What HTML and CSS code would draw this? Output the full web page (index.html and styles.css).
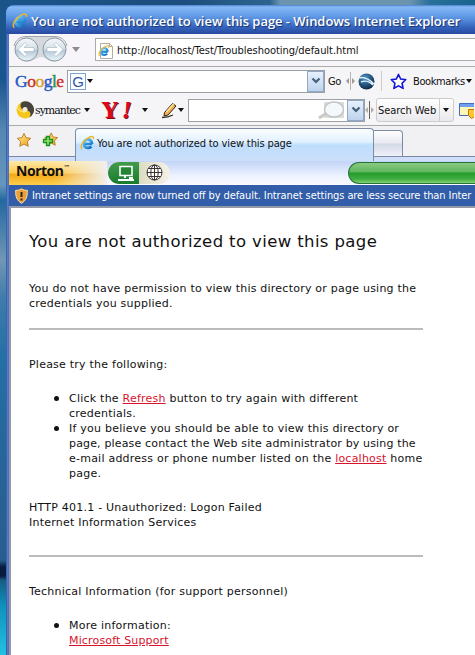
FILE: index.html
```html
<!DOCTYPE html>
<html lang="en">
<head>
<meta charset="utf-8">
<title>You are not authorized to view this page</title>
<link rel="stylesheet" href="styles.css">
</head>
<body>
<svg class="defs" width="0" height="0" aria-hidden="true">
  <defs>
    <linearGradient id="orb" x1="0" y1="0" x2="0" y2="1"><stop offset="0" stop-color="#f4f7fa"/><stop offset=".45" stop-color="#d8e2e9"/><stop offset=".55" stop-color="#b4c8d6"/><stop offset="1" stop-color="#edf7fb"/></linearGradient>
    <linearGradient id="ie" x1="0" y1="0" x2="1" y2="1"><stop offset="0" stop-color="#74d4fa"/><stop offset="1" stop-color="#0868bd"/></linearGradient>
    <linearGradient id="gold" x1="0" y1="0" x2="1" y2="1"><stop offset="0" stop-color="#fff4a0"/><stop offset="1" stop-color="#ee9a13"/></linearGradient>
    <radialGradient id="earth" cx=".4" cy=".3" r=".7"><stop offset="0" stop-color="#4f94c6"/><stop offset="1" stop-color="#0c2a4b"/></radialGradient>
    <symbol id="e" viewBox="0 0 16 16"><path d="M12.900 8.900H4.800M12.900 9A4.500 4.500 0 1 0 12 11.500" fill="none" stroke="url(#ie)" stroke-width="3"/><path d="M4.800 8.400h8.200v1.500H4.800z" fill="#1c86d4"/><path d="M2.200 14.600C-.5 12 3.500 5 9.200 2.200c3.400-1.800 6.100-1.500 4.900 1.600" fill="none" stroke="#e9b62b" stroke-width="1.500"/></symbol>
    <symbol id="star" viewBox="0 0 16 16"><path d="M8 1l2.200 4.600 5 .6-3.600 3.500.9 5L8 12.300l-4.500 2.400.9-5L.8 6.200l5-.6z"/></symbol>
    <symbol id="chev" viewBox="0 0 10 8"><path d="M1.500 1.500L5 5l3.500-3.500" fill="none" stroke="#455f7c" stroke-width="2.200"/></symbol>
  </defs>
</svg>
<div class="window">
  <header class="titlebar">
    <svg class="title-icon" width="16" height="16"><use href="#e"/></svg>
    <span class="title">You are not authorized to view this page - Windows Internet Explorer</span>
  </header>
  <div class="chrome">
    <div class="row nav">
      <svg class="orbs" width="56" height="29" viewBox="0 0 56 29">
        <path d="M13 1.500h29a13 13 0 0 1 0 25.500c-6 0-10-5-14-5s-8 5-15 5a13 13 0 0 1 0-25.500z" fill="#d5d8dc"/><path d="M1 11C3 4 8 1.500 13 1.500h29c5 0 10 2.500 12 9.500" fill="none" stroke="#a2a6aa"/>
        <circle cx="13.500" cy="14.500" r="11.500" fill="url(#orb)" stroke="#8999a6"/><circle cx="41.500" cy="14.500" r="11.500" fill="url(#orb)" stroke="#8999a6"/>
        <path d="M5 14.500l7-7 2 2-3 3h10v4H11l3 3-2 2z" fill="#fff" stroke="#a7bbc9" stroke-width=".7"/><path d="M50 14.500l-7-7-2 2 3 3H34v4h10l-3 3 2 2z" fill="#fff" stroke="#a7bbc9" stroke-width=".7"/>
      </svg>
      <i class="caret grey"></i>
      <div class="address">
        <svg width="17" height="18" viewBox="0 0 17 18"><path d="M2.500 1.500h9l3 3v12h-12z" fill="#fff" stroke="#b3aba0"/><path d="M11.500 1.500v3h3" fill="none" stroke="#b3aba0"/><use href="#e" x="0" y="3" width="12" height="12"/></svg>
        <span>http://localhost/Test/Troubleshooting/default.html</span>
      </div>
    </div>
    <div class="row google">
      <span class="glogo"><b class="b">G</b><b class="r">o</b><b class="y">o</b><b class="b">g</b><b class="g">l</b><b class="r">e</b></span>
      <div class="field gfield"><span class="gbadge">G</span><i class="caret"></i><span class="drop"><svg width="10" height="8"><use href="#chev"/></svg></span></div>
      <span class="go">Go</span>
      <svg class="grip" width="9" height="18" viewBox="0 0 9 18"><path d="M4.500 0v18" stroke="#b9b2ad"/><path d="M3 6v6L0 9zM6 6v6l3-3z" fill="#a09892"/></svg>
      <svg class="earth" width="17" height="17" viewBox="0 0 17 17"><circle cx="8.500" cy="8.500" r="8" fill="url(#earth)"/><path d="M1 5c5-2 10 1 15 6M3 9c5-2 8-1 12 3" fill="none" stroke="#d6edfa" stroke-width="1.500"/></svg>
      <i class="sep"></i>
      <svg class="bstar" width="17" height="17" viewBox="-.5 -.5 17 17"><use href="#star" width="16" height="16" fill="#fff" stroke="#1414d8" stroke-width="1.600"/></svg>
      <span class="bookmarks">Bookmarks</span><i class="caret bcaret"></i>
    </div>
    <div class="row yahoo">
      <svg class="sym" width="18" height="18" viewBox="0 0 18 18"><circle cx="9" cy="9" r="8.500" fill="#f5c71d"/><path d="M6 1a8.500 8.500 0 1 1 7 15.600C17 12 12 8.500 9 9 5 9 3 4 6 1z" fill="#46443f"/><circle cx="9" cy="8.500" r="2.500" fill="#f2ead0"/><path d="M1 5c1 5 5 6 8 6" fill="none" stroke="#fff1a2"/></svg>
      <span class="symtext">symantec</span><i class="caret c1"></i>
      <span class="ylogo"><span class="yy">Y</span><span class="bang">!</span></span><i class="caret c2"></i>
      <svg class="pencil" width="16" height="17" viewBox="0 0 16 17"><path d="M2.500 10.500l8-9 3.500 2.500-8 9-4 1z" fill="#f4ae4d" stroke="#34240d"/><path d="M4.500 10l7-8" stroke="#ffe5a6" stroke-width="1.500"/><path d="M0 15.500c4 0 7-.5 11-2.500" fill="none" stroke="#3a3321" stroke-width="1.300"/></svg><i class="caret c3"></i>
      <div class="field yfield"><svg class="glass" width="28" height="19" viewBox="0 0 28 19"><path d="M6 1h20v16H6z" fill="#dcdcd8"/><path d="M1 17l8-5" stroke="#c8c8c4" stroke-width="3"/><ellipse cx="16" cy="8.500" rx="9.500" ry="7.500" fill="#f5f8fb" stroke="#c0c5ca" stroke-width="1.500"/></svg><span class="drop"><svg width="10" height="8"><use href="#chev"/></svg></span></div>
      <svg class="grip g2" width="9" height="18" viewBox="0 0 9 18"><path d="M4.500 0v18" stroke="#66615e"/><path d="M3 6v6L0 9zM6 6v6l3-3z" fill="#b3aeaa"/></svg>
      <div class="search"><span>Search Web</span><b><i class="caret"></i></b></div>
      <svg class="popup" width="15" height="17" viewBox="0 0 15 17"><path d="M.5 1.500h17v12H.5z" fill="#fff7b8" stroke="#446bc0"/><path d="M1 2h16v3H1z" fill="#6e9ff1"/><path d="M9.500 7.500h6v7l-3 2-3-3z" fill="#ffc72d" stroke="#b87809"/></svg>
    </div>
    <div class="row tabs">
      <svg class="fav" width="16" height="16" viewBox="-.5 -.5 17 17"><use href="#star" width="16" height="16" fill="url(#gold)" stroke="#b77b20"/></svg>
      <svg class="add" width="17" height="16" viewBox="0 0 17 16"><g transform="translate(2 0) scale(.9)"><use href="#star" width="16" height="16" fill="url(#gold)" stroke="#b77b20"/></g><path d="M4.500 4.500h3v3h3v3h-3v3h-3v-3h-3v-3h3z" fill="#8de06b" stroke="#19911c" stroke-width="1.300"/></svg>
      <div class="tab"><svg width="15" height="16"><use href="#e"/></svg><span>You are not authorized to view this page</span></div>
      <div class="newtab"></div>
    </div>
    <div class="row norton">
      <div class="nlogo"><span>Norton</span><sup>™</sup></div>
      <div class="npill">
        <div class="pc"><svg width="18" height="17" viewBox="0 0 18 17"><path d="M3 1.500h12v9H3z" fill="#268435" stroke="#fff" stroke-width="1.600"/><path d="M8 11v2M1 15h16M12 13h4" stroke="#fff" stroke-width="2"/></svg></div>
        <div class="net"><svg width="17" height="17" viewBox="0 0 17 17"><g fill="none" stroke="#38332d"><circle cx="8.500" cy="8.500" r="7.500" fill="#fff"/><ellipse cx="8.500" cy="8.500" rx="3.700" ry="7.500"/><path d="M8.500 1v15M1 8.500h15M2.500 4.500h12M2.500 12.500h12"/></g></svg></div>
      </div>
      <div class="green"></div>
    </div>
    <div class="row info">
      <svg width="13" height="16" viewBox="0 0 13 16"><path d="M6.500.7C8 2 10.500 2.500 12.300 2.300c.3 6-1 10-5.800 13-4.800-3-6.100-7-5.800-13C2.500 2.500 5 2 6.500.7z" fill="#eba03b" stroke="#ffe1a4"/><path d="M6.500 4v5M6.500 10.500v2" stroke="#302515" stroke-width="2"/></svg>
      <span>Intranet settings are now turned off by default. Intranet settings are less secure than Inter</span>
    </div>
  </div>
  <main class="page">
    <h1>You are not authorized to view this page</h1>
    <p class="lead">You do not have permission to view this directory or page using the<br>credentials you supplied.</p>
    <hr>
    <p class="try">Please try the following:</p>
    <ul>
      <li>Click the <a>Refresh</a> button to try again with different<br>credentials.</li>
      <li>If you believe you should be able to view this directory or<br><span class="tight">page, please contact the Web site administrator by using the</span><br>e-mail address or phone number listed on the <a>localhost</a> home<br>page.</li>
    </ul>
    <p class="status">HTTP 401.1 - Unauthorized: Logon Failed<br>Internet Information Services</p>
    <hr>
    <p class="tech">Technical Information (for support personnel)</p>
    <ul><li>More information:<br><a class="tight">Microsoft Support</a></li></ul>
  </main>
</div>
</body>
</html>
```
FILE: styles.css
```css
* { box-sizing: border-box; }
html, body { margin: 0; width: 475px; height: 655px; overflow: hidden; }
body {
  padding: 5px 0 0 6px;
  background:
    linear-gradient(90deg, #1b5488 0 38px, #1c4d7c 180px, #2d648f 270px, #6b93ae 280px 410px, #28709a 430px, #19648f) 0 0 / 475px 14px no-repeat,
    linear-gradient(#1b5488 0, #195690 80px, #5687b2 130px, #6696bd 185px, #2369a0 200px, #7296b5 260px, #3d7baa 300px, #246fa5 360px, #286294 500px, #295d8e 560px, #071b3e 567px 576px, #175b83 580px, #0f90ba 605px, #21c2e2 655px);
  font: 11px "DejaVu Sans Condensed", "DejaVu Sans", sans-serif;
  font-stretch: condensed;
  color: #111;
}
.defs { display: block; position: absolute; }
svg { flex: none; display: block; }
.window { width: 469px; height: 650px; border-radius: 8px 0 0 0; background: linear-gradient(90deg, #2c55a8, #6488cc 2px, #3560b0 3px); overflow: hidden; }
.titlebar { height: 29px; display: flex; align-items: center; padding: 2px 0 0 6px; background: linear-gradient(#4c82cf 0, #86b9f5 2px, #6da6ee 8px, #538adb 15px, #3665be 22px, #2949a0 29px); }
.title { margin-left: 3px; font: 600 13px "Open Sans", sans-serif; letter-spacing: -.04px; color: #fff; text-shadow: 1px 1px 1px #163170; white-space: nowrap; }
.chrome { margin-left: 3px; width: 466px; background: #f5f4f6; overflow: hidden; }
.row { display: flex; align-items: center; white-space: nowrap; overflow: hidden; }
.row > * { flex: none; }
.caret { display: block; width: 0; height: 0; border: solid transparent; border-width: 4px 3.500px 0; border-top-color: #111; flex: none; }
.grey { border-width: 5px 4px 0; border-top-color: #8b8b8b; margin-left: 3px; }

.nav { height: 33px; padding: 0 0 1px 4px; border-bottom: 1px solid #aaa; background: #f7f5f9; }
.address { margin-left: 15px; width: 380px; height: 23px; border: 1px solid #aaa; border-right: 0; background: #fff; display: flex; align-items: center; padding: 2px 0 0 2px; gap: 2px; letter-spacing: -.03px; }

.google { height: 28px; padding-left: 6px; }
.glogo { width: 49px; font: 17.500px "Liberation Serif", serif; letter-spacing: -.5px; }
.glogo b { font-weight: 400; -webkit-text-stroke: .4px; }
.glogo .b { color: #2857c5; } .glogo .r { color: #cf3029; } .glogo .y { color: #d7a31d; } .glogo .g { color: #269145; }
.field { height: 23px; border: 1px solid #9b9fa8; background: #fff; display: flex; align-items: center; }
.gfield { margin-left: 3px; width: 258px; padding-left: 2px; }
.gbadge { width: 16px; height: 17px; border: 1px solid #79a6d7; color: #2c56ab; font: 15px/15px "Liberation Sans", sans-serif; text-align: center; margin-right: 1px; }
.drop { margin-left: auto; width: 17px; height: 21px; border: 1px solid #91a9c4; background: linear-gradient(#e7f1fc, #bdd3ec); display: flex; align-items: center; justify-content: center; }
.go { margin-left: 3px; width: 14px; letter-spacing: -.3px; }
.grip { margin-left: 4px; }
.earth { margin-left: 3px; }
.sep { margin-left: 6px; width: 1px; height: 20px; background: #ccc; }
.bstar { margin-left: 8px; }
.bookmarks { margin-left: 6px; width: 52px; letter-spacing: -.4px; }
.bcaret { margin-left: 1px; }

.yahoo { height: 31px; padding-left: 7px; border-bottom: 1px solid #aaa; }
.symtext { margin-left: 1px; width: 45px; font: 11px "DejaVu Serif", serif; letter-spacing: -1px; }
.c1 { margin-left: 4px; }
.ylogo { margin-left: 10px; width: 34px; display: flex; font: 900 22px/24px "DejaVu Serif", serif; color: #dc0a18; text-shadow: 1px 1px 0 #77111a; }
.yy { width: 22px; padding-left: 2px; }
.bang { font-style: italic; }
.c2 { margin-left: 8px; }
.pencil { margin-left: 14px; }
.c3 { margin-left: 0; }
.yfield { margin-left: 4px; width: 177px; }
.glass { margin-left: auto; }
.yfield .drop { margin-left: 1px; }
.g2 { margin-left: 0; }
.search { margin-left: 2px; width: 78px; height: 24px; border: 1px solid #ccc; border-radius: 3px; background: linear-gradient(#fff, #e9e8ec); display: flex; align-items: center; padding-left: 1px; }
.search span { width: 61px; letter-spacing: -.05px; }
.search b { height: 22px; border-left: 1px solid #ccc; padding: 9px 0 0 3px; }
.popup { margin-left: 5px; }

.tabs { height: 35px; align-items: flex-start; background: linear-gradient(#f1f0f3 0 30px, #7589a9 30px 31px, #d0def9 31px); }
.fav { margin: 6px 0 0 7px; }
.add { margin: 6px 0 0 10px; }
.tab { margin: 2px 0 0 16px; width: 299px; height: 33px; border: 1px solid #7c8ca4; border-bottom: 0; border-radius: 4px 4px 0 0; background: linear-gradient(#fbfdff, #e1f1ff 40%, #bfdefd 50%, #cbdff9); display: flex; align-items: center; padding: 0 0 4px 4px; gap: 2px; letter-spacing: -.12px; }
.newtab { margin-top: 4px; width: 29px; height: 27px; border: 1px solid #7c8ca4; border-left: 0; border-radius: 0 4px 0 0; background: linear-gradient(#fff, #e8eaf2 48%, #d4d9e7 52%, #eff1fa); }

.norton { height: 24px; background: linear-gradient(#c3d4f7, #eff4ff 65%, #fafaff); }
.nlogo { width: 98px; height: 24px; padding-left: 7px; display: flex; background: linear-gradient(90deg, transparent 45%, #f1efec 100%), linear-gradient(#ffe9a7, #ffc94a 50%, #f4a815 55%, #ffce4e); font: 700 14px/20px "Noto Sans", sans-serif; letter-spacing: -.5px; }
.nlogo sup { font: 7px/12px "DejaVu Sans", sans-serif; margin-top: 1px; }
.npill { margin-left: 1px; width: 62px; height: 22px; border-radius: 11px; overflow: hidden; display: flex; background: linear-gradient(90deg, #b9bb9b, #e5e3cd 65%, #f4f1e8); }
.pc { width: 31px; height: 22px; padding: 3px 0 0 9px; background: linear-gradient(#429b4b, #197c2d); border-radius: 11px 0 0 11px; }
.net { padding: 2px 0 0 7px; }
.green { margin-left: 178px; width: 127px; height: 22px; border: 1px solid #267438; border-right: 0; border-radius: 11px 0 0 11px; background: linear-gradient(#8bca82, #5fb75c 45%, #239c2b 50%, #40ae41 80%, #85d174); }

.info { height: 21px; padding-left: 6px; background: #315da9; color: #fff; }
.info span { margin-left: 4px; letter-spacing: -.09px; }

.page { margin-left: 3px; height: 460px; width: 466px; border: solid #9298a5; border-width: 2px 0 0 2px; background: #fff; padding: 23px 0 0 18px; font: 11px/15px "DejaVu Sans", sans-serif; letter-spacing: .23px; font-stretch: normal; }
h1 { margin: 0; font-size: 16.500px; line-height: 22px; font-weight: 400; letter-spacing: .38px; }
p { margin: 0; }
.lead { margin-top: 28px; }
hr { margin: 17px 0 0; width: 394px; height: 2px; border: 0; background: #bcbcbc; }
.try, .tech { margin-top: 27px; }
ul { margin: 19px 0 0; padding-left: 40px; list-style: none; }
li { position: relative; }
li::before { content: ""; position: absolute; left: -15px; top: 5px; width: 5px; height: 5px; border-radius: 50%; background: #111; }
a { color: #d6142c; text-decoration: underline; }
.tight { letter-spacing: .16px; }
.status { margin-top: 19px; }
.status + hr { margin-top: 25px; }
```
